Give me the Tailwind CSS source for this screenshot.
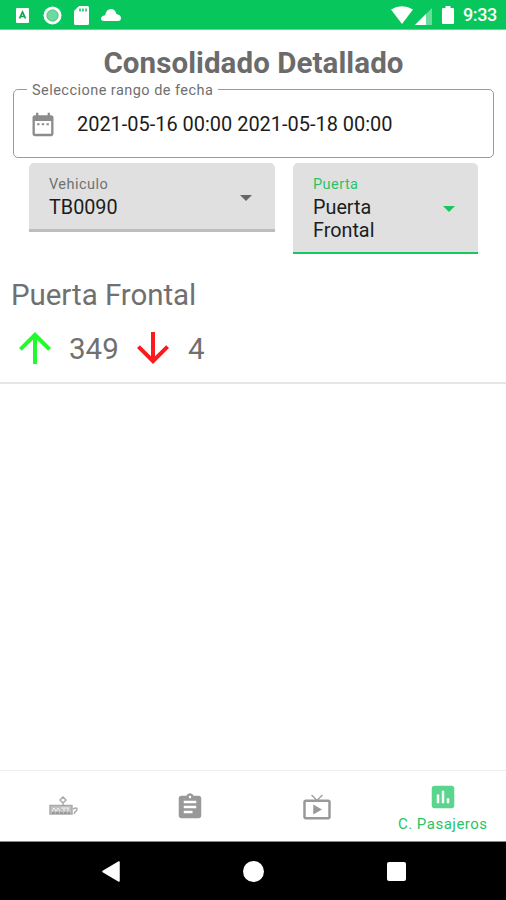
<!DOCTYPE html>
<html lang="es">
<head>
<meta charset="utf-8">
<title>Consolidado Detallado</title>
<script src="https://cdn.jsdelivr.net/npm/@tailwindcss/browser@4"></script>
</head>
<body class="bg-white">
<div class="w-[506px] h-[900px] flex flex-col overflow-hidden bg-white font-['Roboto',sans-serif] text-[#6b6b6b]">
  <header class="h-[30px] shrink-0 bg-[#07c65b] border-b border-[#5bdc93] flex items-center justify-between pl-4 pr-[9px] pt-[1px] text-white">
    <div class="flex items-center">
      <svg class="w-[13px] h-[15px]" viewBox="0 0 13 15"><rect width="13" height="15" rx="1" fill="#fff"/><path d="M3.500 10.500 6.500 4l3 6.500M5 8.500h3" fill="none" stroke="#07a64c" stroke-width="1.700"/></svg>
      <svg class="w-[19px] h-[19px] ml-[14px]" viewBox="0 0 19 19"><circle cx="9.500" cy="9.500" r="9" fill="#fff"/><circle cx="9.500" cy="9.500" r="5.600" fill="#6ed99c" stroke="#35c775" stroke-width="1"/></svg>
      <svg class="w-[15px] h-[19px] ml-[12px]" viewBox="0 0 15 19"><path d="M5 0h8.500Q15 0 15 1.500v16q0 1.500-1.500 1.500h-12Q0 19 0 17.500V5z" fill="#fff"/><path d="M6 2.500v3M9 2.500v3M12 2.500v3" stroke="#07c65b" stroke-width="1.500"/></svg>
      <svg class="w-[20px] h-[12px] ml-[12px] -mt-[1px]" viewBox="0 0 20 12"><path d="M3 12Q0 12 0 9.500 0 7 4 6.200 5.500 0 10 0q4 0 5.500 5Q20 6 20 9q0 3-3 3z" fill="#fff"/></svg>
    </div>
    <div class="flex items-center">
      <svg class="w-[22px] h-[18px]" viewBox="0 0 22 18"><path d="M0 3.500Q11-3 22 3.500L11 18z" fill="#fff"/></svg>
      <svg class="w-[17px] h-[17px] ml-[2px] mt-[2px]" viewBox="0 0 17 17"><path d="M17 0v17H0z" fill="#fff" opacity=".4"/><path d="M11 6v11H0z" fill="#fff"/></svg>
      <svg class="w-[12px] h-[18px] ml-[10px]" viewBox="0 0 12 18"><path d="M3.500 0h5v2H11q1 0 1 1v14q0 1-1 1H1q-1 0-1-1V3q0-1 1-1h2.500z" fill="#fff"/></svg>
      <span class="ml-[9px] w-[34px] text-[18px] leading-[22px] font-medium tracking-[-0.4px] whitespace-nowrap">9:33</span>
    </div>
  </header>

  <main class="grow flex flex-col">
    <h1 class="mt-[14px] h-[36px] pl-[1px] text-center text-[29.500px] leading-[39px] font-bold tracking-[0.08px] text-[#6b6b6b] whitespace-nowrap">Consolidado Detallado</h1>

    <fieldset class="ml-[13px] mr-[12px] h-[78px] rounded-[5px] border border-[#9b9b9b] pl-[13px] text-[#6f6f6f]">
      <legend class="px-[5px] pt-[3px] text-[14.500px] leading-[15px] tracking-[0.46px] whitespace-nowrap">Seleccione rango de fecha</legend>
      <div class="flex items-center h-[52px]">
        <svg class="w-[28px] h-[29px] ml-[2px]" viewBox="0 0 24 24" fill="#8c8c8c"><path d="M9 11H7v1.600h2zm4 0h-2v1.600h2zm4 0h-2v1.600h2zm2-7h-1V2h-2v2H8V2H6v2H5c-1.110 0-1.990.9-1.990 2L3 20c0 1.100.89 2 2 2h14c1.100 0 2-.9 2-2V6c0-1.100-.9-2-2-2zm0 16H5V9h14z"/></svg>
        <span class="ml-[20px] text-[19.950px] leading-6 text-[#1c1c1c] whitespace-nowrap">2021-05-16 00:00 2021-05-18 00:00</span>
      </div>
    </fieldset>

    <div class="flex items-start mt-[5px] pl-[29px] h-[91px]">
      <div class="w-[246px] h-[69px] rounded-t-[5px] bg-[#e0e0e0] border-b-[3px] border-[#bdbdbd] flex items-center justify-between pl-5 pr-[23px]">
        <div class="pt-[1px]">
          <div class="text-[14.500px] leading-[22px] tracking-[0.45px] text-[#707070]">Vehiculo</div>
          <div class="text-[19.800px] leading-[23px] text-[#1c1c1c]">TB0090</div>
        </div>
        <svg class="w-[12px] h-[6px] mt-[4px]" viewBox="0 0 12 6"><path d="M0 0h12L6 6z" fill="#666"/></svg>
      </div>
      <div class="ml-[18px] w-[185px] h-[91px] rounded-t-[5px] bg-[#e0e0e0] border-b-2 border-[#16c75e] flex items-center justify-between pl-5 pr-[23px]">
        <div class="w-[90px]">
          <div class="text-[14.500px] leading-[22px] tracking-[0.45px] text-[#28c466]">Puerta</div>
          <div class="text-[19.800px] leading-[23px] text-[#1c1c1c]">Puerta Frontal</div>
        </div>
        <svg class="w-[12px] h-[6px] mt-[2px]" viewBox="0 0 12 6"><path d="M0 0h12L6 6z" fill="#16c75e"/></svg>
      </div>
    </div>

    <section class="h-[130px] border-b-2 border-[#e5e5e5] pl-[11px] pt-[23px] text-[29.500px] text-[#707070]">
      <h2 class="leading-[36px] tracking-[-0.05px] whitespace-nowrap">Puerta Frontal</h2>
      <div class="flex items-center h-[48px] mt-[12px]">
        <svg class="w-[48px] h-[48px] -mt-[2px]" viewBox="0 0 24 24" fill="#21fb2b"><path d="M4 12l1.410 1.410L11 7.830V20h2V7.830l5.580 5.590L20 12l-8-8z"/></svg>
        <span class="ml-[10px] w-[60px] leading-[36px]">349</span>
        <svg class="w-[48px] h-[48px] -mt-[2px]" viewBox="0 0 24 24" fill="#fb1a1d"><path d="M20 12l-1.410-1.410L13 16.170V4h-2v12.170l-5.580-5.590L4 12l8 8z"/></svg>
        <span class="ml-[11px] leading-[36px]">4</span>
      </div>
    </section>
  </main>

  <nav class="h-[71px] shrink-0 grid grid-cols-4 border-t border-[#eee] bg-white">
    <div class="flex items-center justify-center">
      <svg class="w-[29px] h-[20px]" viewBox="0 0 29 20" fill="none" stroke="#aaa"><path d="M14 1l3 3-3 3-3-3zM14 7v3" stroke-width="1.500"/><rect x="1" y="9.500" width="22" height="8.500" fill="#c2c2c2" stroke-width="1.500"/><path d="M3 15l2-3 2 3 2-3 2 3M12 12h8M15 12v3M19 12v3" stroke="#f2f2f2"/><path d="M3 17h18" stroke="#999" stroke-width="2" stroke-dasharray="3 1"/><path d="M24 13q4-2 4 0 0 2-2 3l-1 2" stroke-width="1.500"/></svg>
    </div>
    <div class="flex items-center justify-center">
      <svg class="w-[30px] h-[30px] mt-[1px]" viewBox="0 0 24 24" fill="#999"><path d="M19 3h-4.180C14.400 1.840 13.300 1 12 1c-1.300 0-2.400.84-2.820 2H5c-1.100 0-2 .9-2 2v14c0 1.100.9 2 2 2h14c1.100 0 2-.9 2-2V5c0-1.100-.9-2-2-2zm-7 0c.55 0 1 .45 1 1s-.45 1-1 1-1-.45-1-1 .45-1 1-1zm2 14H7v-2h7v2zm3-4H7v-2h10v2zm0-4H7V7h10v2z"/></svg>
    </div>
    <div class="flex items-center justify-center">
      <svg class="w-[30px] h-[30px] mt-[2px] ml-[1px]" viewBox="0 0 24 24" fill="#999"><path d="M21 6h-7.590l3.290-3.290L16 2l-4 4-4-4-.7.710L10.590 6H3c-1.100 0-2 .89-2 2v12c0 1.100.9 2 2 2h18c1.100 0 2-.9 2-2V8c0-1.110-.9-2-2-2zm0 14H3V8h18v12zM9 10v8l7-4z"/></svg>
    </div>
    <div class="flex flex-col items-center pt-[11px]">
      <svg class="w-[30px] h-[30px]" viewBox="0 0 24 24" fill="#59d58d"><path d="M19 3H5c-1.100 0-2 .9-2 2v14c0 1.100.9 2 2 2h14c1.100 0 2-.9 2-2V5c0-1.100-.9-2-2-2zM9 17H7v-7h2v7zm4 0h-2V7h2v10zm4 0h-2v-4h2v4z"/></svg>
      <span class="mt-[3px] text-[15px] leading-[18px] tracking-[0.5px] text-[#28c466] whitespace-nowrap">C. Pasajeros</span>
    </div>
  </nav>
  <footer class="h-[59px] shrink-0 bg-black border-t border-[#888] flex items-center pl-[102px]">
    <svg class="w-[18px] h-[21px]" viewBox="0 0 18 21"><path d="M17 1v19L1 10.500z" fill="#fff" stroke="#fff" stroke-width="1.500" stroke-linejoin="round"/></svg>
    <div class="ml-[123px] w-[21px] h-[21px] rounded-full bg-white"></div>
    <div class="ml-[123px] w-[19px] h-[19px] rounded-[2px] bg-white"></div>
  </footer>
</div>
</body>
</html>
